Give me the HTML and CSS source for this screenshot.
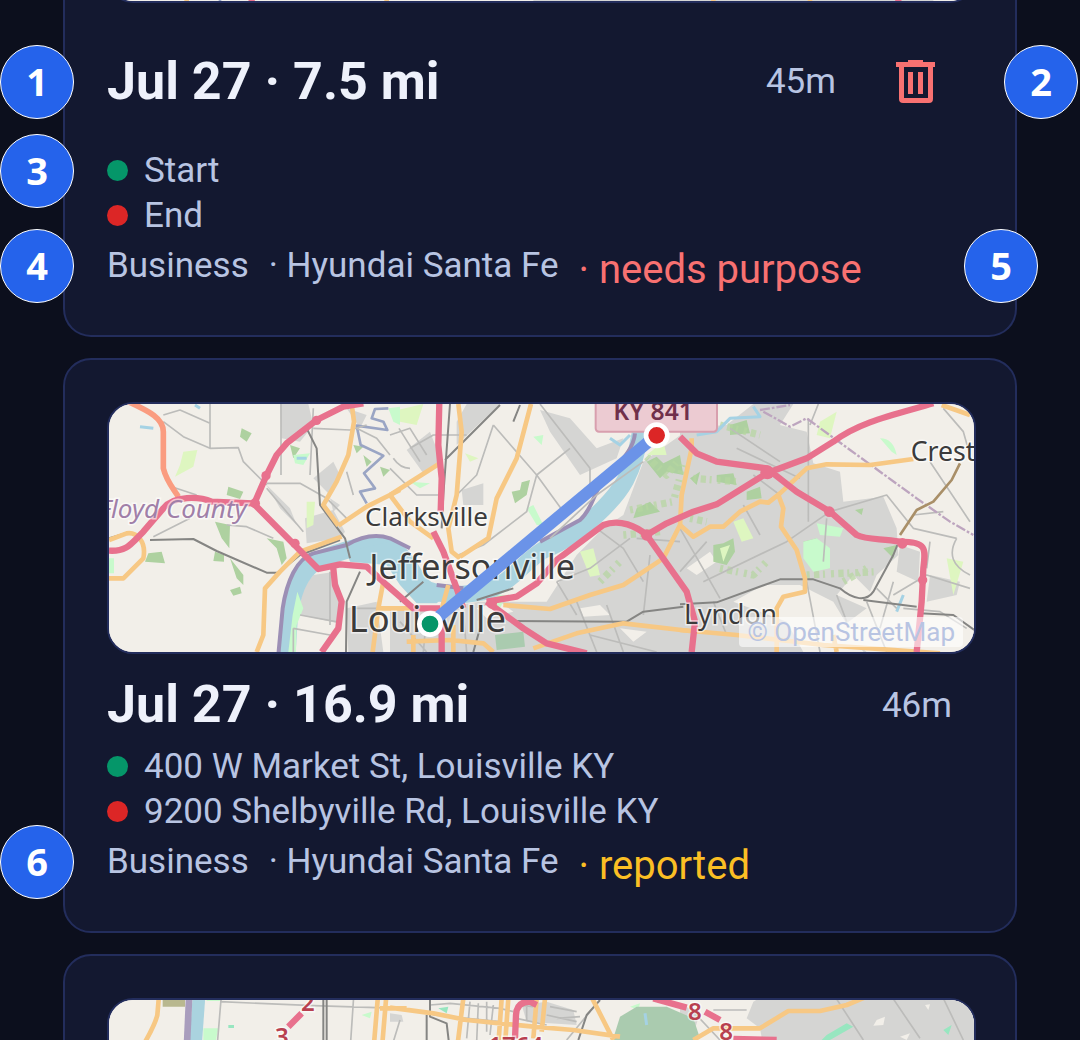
FILE: index.html
```html
<!DOCTYPE html>
<html lang="en">
  <head>
    <meta charset="utf-8">
    <meta name="viewport" content="width=device-width, initial-scale=1">
    <title>Trips</title>
    <link rel="stylesheet" href="styles.css">
  </head>
  <body>
    <main class="trips">
      <article class="card card-continued">
        <div class="map-peek">
          <div class="map">
            <svg viewBox="27 27 2595 744" aria-hidden="true">
              <rect class="base" x="0" y="0" width="2640" height="780"/>
              <path class="urban" d="M1300 27H2500V771H1300Z"/>
              <path class="secondary" d="M260 600V771M860 600V771M1840 600V771M2130 600V771"/>
              <path class="creek" d="M360 600V771"/>
              <path class="major" d="M455 600V771M2395 600V771"/>
            </svg>
          </div>
        </div>
        <header class="head head-tall">
          <span class="badge badge-left">1</span>
          <h2 class="title">Jul 27 · 7.5 mi</h2>
          <span class="duration">45m</span>
          <button class="delete" type="button" aria-label="Delete trip">
            <svg class="trash" viewBox="0 0 40 44" aria-hidden="true">
              <path d="M12 0H27V2H39V7H37V39Q37 43 33 43H7Q3 43 3 39V7H0V2H12ZM8 7V38H32V7Z" fill-rule="evenodd"/>
              <path d="M12 12H17V34H12ZM22 12H27V34H22Z"/>
            </svg>
          </button>
          <span class="badge badge-right">2</span>
        </header>
        <ul class="stops">
          <li class="stop"><span class="badge badge-left">3</span><span class="dot start"></span>Start</li>
          <li class="stop"><span class="dot end"></span>End</li>
        </ul>
        <div class="meta">
          <span class="badge badge-left">4</span>
          <span>Business</span>
          <span>· Hyundai Santa Fe</span>
          <span class="status missing">· needs purpose</span>
          <span class="badge badge-inside">5</span>
        </div>
      </article>

      <article class="card">
        <div class="map">
          <svg viewBox="27 27 2595 744" role="img" aria-label="Route from Louisville to KY 841">
            <rect class="base" x="0" y="0" width="2640" height="780"/>

            <!-- built up areas -->
            <g class="urban">
              <path d="M540 27H625L640 90L600 140L545 130ZM615 370L700 345L735 410L720 430L620 445ZM600 590L640 540L705 530L725 600L715 685L600 660ZM500 270L570 340L590 390L540 340ZM690 310L720 330L700 350Z"/>
              <path d="M640 250L700 200L720 240L690 300ZM740 40L800 60L780 100ZM740 640L830 620L850 771H745Z"/>
              <g transform="translate(870 0)">
                <path d="M450 45L540 70L620 160L700 130L680 190L570 240L480 110ZM50 165L120 110L155 200L100 235ZM215 285L280 265L280 330L220 330ZM230 27H330L200 150V80Z"/>
                <path d="M470 620L560 480L640 400L700 360L760 200L900 100V771H0V650L130 640L270 620Z"/>
              </g>
              <g transform="translate(1740 0)">
                <path d="M0 100L140 90L220 27H340L300 90L380 110L400 205L480 230L490 320L610 305L650 400L655 480L590 540L570 590L520 540L470 600L560 640L480 700L560 771H0Z"/>
                <path d="M660 450L720 470L715 560L650 530ZM750 540L840 560L830 600L740 620Z"/>
              </g>
            </g>
            <g class="clearing">
              <path d="M1900 620L1990 570L2100 570L2200 620L2290 771H2110L2060 680Z"/>
              <path d="M1130 640L1200 620L1240 650L1160 670ZM1760 520L1830 470L1850 500L1790 540Z"/>
              <path d="M1440 640L1500 630L1530 660L1450 665ZM1560 700L1640 710L1600 740Z"/>
            </g>

            <!-- parks and woods -->
            <g class="wood">
              <path d="M425 100L455 115L440 140L420 125ZM385 275L430 290L420 312L380 300ZM345 380L390 390L388 460L365 430ZM345 470L372 480V500L340 498ZM390 490L430 540V570L410 550ZM390 585L420 575L425 595L400 602ZM145 475L185 470L195 505L135 500ZM500 430L550 440L560 490L545 510L530 460ZM570 150L600 160L580 190ZM760 150L790 155L770 175ZM790 180L815 200L800 215ZM840 215L870 225L850 245Z"/>
              <path d="M1235 290L1260 285L1265 262L1290 255L1280 300L1245 325ZM1640 200L1670 185L1690 205L1740 180L1750 240L1700 230L1680 250ZM1610 340L1650 320L1680 350L1600 370Z"/>
              <path d="M1840 450L1870 445L1900 430L1905 470L1880 510L1840 500ZM1770 250L1800 230L1790 270ZM1850 240L1900 235L1910 270L1850 260ZM1940 290L1980 275L1985 310L1940 315ZM1890 90L1940 75L1950 115L1890 120ZM2350 460L2390 450L2380 490ZM2265 345L2290 340L2285 360ZM2110 440L2150 430L2130 460Z"/>
            </g>
            <g class="speckle">
              <path d="M1590 345L1720 320L1750 210M1640 185L1700 240L1740 190M1570 420L1680 410M1500 560L1560 500"/>
              <path d="M1780 250L1910 260M1860 90L1980 120M1860 520L1960 540L2000 500M2120 540L2330 530M1770 370L1820 380M2230 560L2300 520"/>
            </g>
            <g class="grass">
              <path d="M250 170L292 165L280 215L225 245L240 210ZM620 320L645 320L640 390L620 400ZM870 50L970 27L950 90L900 80ZM600 530L640 500L620 560L600 590ZM1095 175L1135 190L1110 200ZM1440 470L1480 460L1500 540L1470 545ZM1900 380L1930 370L1960 430L1925 440ZM1860 460L1890 450L1870 500ZM2160 80L2210 50L2190 130L2150 120ZM2540 490L2590 500L2560 600ZM1640 180L1690 140L1700 180Z"/>
            </g>
            <g class="mint">
              <path d="M580 180L630 175L610 210L585 205ZM27 490L42 490V535H27ZM865 40L900 35V90L880 80ZM1280 340L1300 330L1330 390L1310 390ZM1300 125L1330 120L1325 150ZM2110 440L2150 430L2190 460L2190 520L2140 530L2110 490ZM2150 385L2230 400L2220 425L2160 420ZM2340 130Q2380 130 2390 180L2375 170ZM930 260L990 265L960 280ZM1150 600L1220 600L1200 640Z"/>
            </g>
            <path class="green-park" d="M1185 720L1270 710L1275 755L1190 765Z"/>

            <!-- Ohio river and creeks -->
            <path class="river" d="M560 790L568 660C580 570 610 510 680 485C750 460 810 440 870 460C940 490 940 580 1000 590C1060 605 1090 600 1150 590C1230 570 1270 500 1330 465C1400 440 1470 380 1510 340C1560 290 1600 240 1622 110"/>
            <path class="water" d="M740 470L870 440L930 480L970 560L1050 590L1010 625L950 625L900 570L860 510L750 500Z"/>
            <path class="mint" d="M565 771L578 660L592 590L610 640L590 690L588 771Z"/>
            <path class="boundary" d="M535 780L548 640C560 560 590 490 640 475L740 450C800 415 840 420 870 430L930 460M1010 570L1090 580M1320 440L1440 375C1480 340 1480 290 1510 260C1550 210 1600 170 1605 115"/>
            <path class="creek" d="M865 40L825 42L815 70L850 80L862 105L770 92L782 150L850 182L792 235L825 280L780 290L800 325"/>
            <path class="creek-blue" d="M1790 120L1850 110L1890 70L1980 65L1960 35M2410 600L2390 650M120 95L160 100M285 30L300 40M1530 130L1560 150L1590 120M590 190H620"/>

            <!-- local roads -->
            <g class="minor">
              <path d="M190 80L250 125L330 160L415 158L430 200L500 270M330 27V160M190 60L240 45L330 85M543 27V240M500 265H600L680 310L740 370M500 280L610 410M380 390L440 395L520 430M160 425L270 370M640 100L750 105L800 90M215 275L290 300M600 660L720 682M580 700V771M580 700L690 720M690 530V690M760 300L740 230M640 40L630 240M870 180L830 130L770 100M880 190Q900 220 930 220M760 640H850"/>
              <g transform="translate(870 0)">
                <path d="M27 100L90 200M60 160L130 120H230M310 90L440 240L520 350M540 160L440 240L410 350L280 450L205 480M450 27L600 220M600 220V270M760 200L620 300L480 430M0 120L60 100L110 180M310 90L260 240L200 300M0 220L80 300L150 300M500 560L560 660M500 560L600 520L720 430M650 630L700 771M620 400L700 460L760 560M560 620L620 771M740 430L870 440M780 480L760 660M600 720L800 771"/>
                <path d="M30 680L110 771M110 660L100 771M220 650L230 771"/>
              </g>
              <g transform="translate(1740 0)">
                <path d="M0 400L120 610M70 560L320 440L450 350L620 300L700 400L830 430M150 100L300 200M385 70V380M415 27L390 90M190 330L240 420M440 370L430 500M790 40L850 110L870 180M750 200L870 380M700 360L790 350M830 430Q790 500 870 540M750 440L740 520M640 600L740 540L870 580M590 580L650 640M670 640L780 650L860 700M560 620L620 771M470 600L500 680M100 620L140 720M380 560L420 771M640 560L600 700"/>
                <path d="M220 240L300 300M170 160L360 250M0 530L80 440"/>
              </g>
            </g>
            <g class="rail">
              <path d="M27 430L75 415M150 435L280 432L350 468L500 533H535L600 480L720 435M620 100L650 160L660 330L735 430L750 490M780 530L740 620L738 771"/>
              <path d="M1050 27L1030 300L1025 400M1200 30L1035 195M1260 30L1240 80M1230 678L1580 680L1630 650L1750 635M1130 615L1240 580M900 620L970 560M1140 700L1120 771"/>
              <path d="M1740 628L1850 622L2040 553L2140 553L2220 580C2260 615 2300 620 2320 590L2380 480L2392 450M2290 615L2450 635M2460 655L2560 660L2630 710"/>
            </g>
            <path class="county" d="M1980 45L2070 30M1990 50L2070 95L2120 70L2230 150L2450 310L2550 380L2620 420"/>

            <!-- secondary roads -->
            <g class="secondary">
              <path d="M27 550H70L130 490C140 440 110 410 80 415L27 435M470 771L490 720L495 580L540 530L600 470L725 425M715 392L800 335L900 285M715 392L670 330L710 260L745 180L762 80L755 27M850 560L835 640L818 771M835 640H940"/>
              <g transform="translate(870 0)">
                <path d="M0 300L150 205M0 300L60 380L130 430M205 27L215 110L200 300L175 400L185 470L210 490M210 485L295 430L320 310L380 190L423 27M340 630L480 642L600 600L700 570L820 490L870 390L875 300L905 160V130M430 760L560 715L700 685L900 708M175 570L150 660M70 720V771M190 690V771M50 740L180 735L280 745L310 771M0 640H70"/>
              </g>
              <g transform="translate(1740 0)">
                <path d="M0 390L40 425L90 395L130 395L180 350L240 320L265 323L300 295L380 220L440 208L570 210L700 192M295 300L310 340L303 395L350 465L375 550V590L310 605L290 640V771M0 705L170 720L430 750L780 775M785 30L870 60M470 771L460 720"/>
              </g>
            </g>
            <path class="brown" d="M2580 205L2555 255L2500 320L2450 345L2400 420"/>

            <!-- highways -->
            <path class="trunk" d="M85 20C150 50 190 70 190 110V220C200 260 220 280 235 305"/>
            <g class="major">
              <path d="M27 467C80 470 90 450 130 410L190 340C220 300 300 305 335 320L460 325L655 522L720 508L800 515L860 570L940 640L1020 640M465 320L500 240L530 180L560 145L650 75L730 35L790 25M700 520L705 570L725 620L715 700L665 771"/>
              <path d="M1018 20L1015 150L1025 250L1022 350M1000 410L1030 470L1070 580L1090 640M1025 660V771M1160 620L1250 605L1310 565L1370 495L1510 390C1560 370 1610 395 1640 420L1700 385L1780 350L1850 328L2000 235L2120 190L2200 140C2280 80 2380 60 2500 25M1640 420L1760 590L1785 680L1775 771M1160 620L1270 700L1340 745L1460 775M1740 125L1790 175L1850 200L2000 220L2090 290L2190 350L2270 420C2300 435 2340 430 2400 440C2480 440 2478 460 2470 520L2465 620L2450 771"/>
            </g>
            <g class="junction">
              <circle cx="2002" cy="232" r="21"/><circle cx="2188" cy="350" r="16"/><circle cx="2407" cy="445" r="16"/><circle cx="1640" cy="420" r="17"/><circle cx="465" cy="325" r="15"/><circle cx="585" cy="445" r="14"/><circle cx="498" cy="242" r="14"/><circle cx="650" cy="76" r="14"/><circle cx="1175" cy="625" r="16"/><circle cx="2468" cy="555" r="14"/>
            </g>

            <rect class="shield" x="1487" y="-20" width="364" height="130" rx="10"/>
            <text class="shield-text" x="1540" y="75">KY 841</text>
            <text class="county-name" x="440" y="370" text-anchor="end">Floyd County</text>
            <text class="town" x="795" y="393">Clarksville</text>
            <text class="city" x="808" y="553">Jeffersonville</text>
            <text class="city capital" x="746" y="712">Louisville</text>
            <text class="suburb" x="1752" y="686">Lyndon</text>
            <text class="suburb" x="2432" y="198">Crest</text>

            <path class="route" d="M990 687L1670 120"/>
            <circle class="pin pin-start" cx="990" cy="687" r="32"/>
            <circle class="pin pin-end" cx="1670" cy="121" r="32"/>
          </svg>
          <a class="attribution" href="#">© OpenStreetMap</a>
        </div>
        <header class="head">
          <h2 class="title">Jul 27 · 16.9 mi</h2>
          <span class="duration">46m</span>
        </header>
        <ul class="stops">
          <li class="stop"><span class="dot start"></span>400 W Market St, Louisville KY</li>
          <li class="stop"><span class="dot end"></span>9200 Shelbyville Rd, Louisville KY</li>
        </ul>
        <div class="meta">
          <span class="badge badge-left">6</span>
          <span>Business</span>
          <span>· Hyundai Santa Fe</span>
          <span class="status reported">· reported</span>
        </div>
      </article>

      <article class="card">
        <div class="map">
          <svg viewBox="27 45 2595 744" role="img" aria-label="Trip map">
            <rect class="base" x="0" y="0" width="2640" height="800"/>
            <path class="urban" d="M1960 50L2000 27H2640V800H2100L1980 130L1940 100ZM870 85L905 90L910 110H870ZM1265 60L1340 50L1420 75L1430 120L1280 110ZM1740 60L1800 80L1780 150L1740 140Z"/>
            <path class="clearing" d="M2330 105L2355 95L2350 120L2320 122ZM2400 155L2430 145L2420 165ZM2475 60L2490 58L2485 75Z"/>
            <path class="farm" d="M188 40H255V65H188Z"/>
            <path class="mint" d="M310 130H355L345 180H310ZM320 40H365V48H320ZM1590 65L1620 55L1615 75ZM785 90L815 80L810 100Z"/>
            <path class="green" d="M2165 165L2180 150L2240 115L2260 125L2190 165ZM1015 70L1045 65L1040 85ZM385 120H402V129H385ZM2530 135L2555 120L2545 150Z"/>
            <path class="green-park" d="M1540 160L1560 95L1610 65L1700 65L1780 100L1800 160L1700 200H1560Z"/>
            <path class="river narrow" d="M298 20L285 200"/>
            <path class="creek wide" d="M268 20L260 200"/>
            <path class="creek-blue" d="M1635 85L1640 120"/>
            <path class="minor" d="M365 20L350 200M360 50L640 62L900 70M762 20L750 200M990 60L1050 55L1200 70L1240 80M1110 50L1100 160M1135 55L1130 170M1160 50V140M1180 60L1170 150M1000 90L1200 110M1250 100L1340 120M1350 65L1430 80M1370 100L1440 95M1340 90L1430 110M1470 80L1400 165M900 105L880 170M1280 60V110M1250 60L1300 65M1840 75H1940M2200 27L2290 165M2370 27L2460 160M2530 40L2590 165M1780 80L1860 165"/>
            <path class="rail" d="M670 20V200M680 20V200M990 20V95L1040 115L1050 200M980 90V200M1500 45L1460 90L1435 165"/>
            <path class="secondary" d="M178 20L172 90C165 120 150 145 130 180M835 20L820 200M860 20L845 200M840 70H920M870 68L1000 85L1100 105L1300 125L1420 135L1560 155M1090 40L1070 200M1205 40L1195 180M1225 40L1215 180M1310 40L1300 160M1335 40L1325 140M1470 27L1540 165M1780 165L1840 130H1980L2065 78L2160 78L2240 60L2300 35"/>
            <path class="major" d="M605 85L565 125M1245 160L1248 90Q1250 50 1290 50L1310 60M1660 40L1760 68M1815 80L1860 105M1900 162L2030 165"/>
            <text class="exit" x="603" y="78">2</text>
            <text class="exit" x="525" y="180">3</text>
            <text class="exit" x="1165" y="207">1764</text>
            <text class="exit" x="1764" y="104">8</text>
            <text class="exit" x="1858" y="164">8</text>
          </svg>
        </div>
      </article>
    </main>
  </body>
</html>
```
FILE: styles.css
```css
* {
    box-sizing: border-box;
}
body {
    margin: 0;
    height: 100vh;
    overflow: hidden;
    background: #0c0f1d;
    color: #b8c4e2;
    font-family: Roboto, "Liberation Sans", sans-serif;
    font-size: 35px;
}
.trips {
    display: flex;
    flex-direction: column;
    gap: 21px;
    padding: 0 63px;
}
.card {
    padding: 42px 39px 42px 42px;
    border: 2px solid #232d5c;
    border-radius: 28px;
    background: #131830;
}
.card-continued {
    padding-top: 0;
    border-top: 0;
    border-top-left-radius: 0;
    border-top-right-radius: 0;
}
/* only the last pixels of this map are scrolled into view */
.map-peek {
    display: flex;
    align-items: flex-end;
    height: 3px;
    overflow: hidden;
}
.map {
    position: relative;
    width: 100%;
    overflow: hidden;
    border: 2px solid #232d5c;
    border-radius: 26px;
    background: #f2efe9;
}
.map svg {
    display: block;
    width: 100%;
    height: auto;
}
.attribution {
    position: absolute;
    right: 11px;
    bottom: 5px;
    padding: 0 8px;
    border-radius: 4px;
    background: rgba(255, 255, 255, 0.6);
    color: #b8c4e2;
    font-size: 26px;
    line-height: 30px;
    text-decoration: none;
}

/* card text */
.head {
    position: relative;
    display: flex;
    align-items: center;
    margin: 21px 0 9px;
    padding-right: 24px;
}
.head-tall {
    min-height: 115px;
    padding-right: 0;
}
.title {
    flex: 1;
    margin: 0;
    color: #eef1fb;
    font-size: 52px;
    font-weight: 700;
    line-height: 60px;
}
.delete {
    display: flex;
    align-items: center;
    justify-content: center;
    width: 120px;
    height: 115px;
    margin-left: 20px;
    padding: 0;
    border: 0;
    background: none;
    color: #f87171;
    cursor: pointer;
}
.trash {
    width: 40px;
    height: 44px;
    fill: currentColor;
}
.stops {
    margin: 0;
    padding: 0;
    list-style: none;
}
.stop {
    position: relative;
    display: flex;
    align-items: center;
    gap: 16px;
    line-height: 45px;
}
.dot {
    width: 21px;
    height: 21px;
    border-radius: 50%;
}
.start {
    background: #059669;
}
.end {
    background: #dc2626;
}
.meta {
    position: relative;
    display: flex;
    align-items: center;
    gap: 20px;
    height: 55px;
}
.status {
    padding-top: 8px;
    font-size: 40px;
}
.missing {
    color: #f87171;
}
.reported {
    color: #fbbf24;
}

/* numbered callouts */
.badge {
    position: absolute;
    top: 50%;
    width: 74px;
    height: 74px;
    border: 1px solid #fff;
    border-radius: 50%;
    transform: translateY(-50%);
    background: #2563eb;
    color: #fff;
    font-family: "Open Sans", "Noto Sans", sans-serif;
    font-size: 38px;
    font-weight: 700;
    line-height: 70px;
    text-align: center;
}
.badge-left {
    left: -107px;
}
.badge-right {
    right: -102px;
}
.badge-inside {
    right: -62px;
}

/* map drawing */
.map path {
    stroke-linejoin: round;
}
.base, .clearing {
    fill: #f2efe9;
}
.urban {
    fill: #d5d5d3;
}
.farm {
    fill: #b9b88f;
}
.wood {
    fill: #aed1a0;
}
.grass {
    fill: #def6c0;
}
.mint {
    fill: #c8facc;
}
.green {
    fill: #98e6c0;
}
.green-park {
    fill: #aacbaf;
}
.speckle {
    fill: none;
    stroke: #b5d6a0;
    stroke-width: 22;
    stroke-dasharray: 9 13 16 11 6 18;
    opacity: 0.7;
}
.river, .boundary, .creek, .creek-blue, .minor, .rail, .county, .secondary, .brown, .trunk, .major, .route {
    fill: none;
}
.river {
    stroke: #aad3df;
    stroke-width: 52;
}
.water {
    fill: #aad3df;
}
.narrow {
    stroke-width: 38;
}
.boundary {
    stroke: #9c8fb5;
    stroke-width: 12;
}
.creek {
    stroke: #9aa5c4;
    stroke-width: 8;
}
.wide {
    stroke: #a99dbd;
    stroke-width: 20;
}
.creek-blue {
    stroke: #a5d2e4;
    stroke-width: 9;
}
.minor {
    stroke: #bcbcba;
    stroke-width: 5;
}
.rail {
    stroke: #858583;
    stroke-width: 6;
}
.county {
    stroke: #bda5bf;
    stroke-width: 7;
    stroke-dasharray: 30 6 8 6;
}
.secondary {
    stroke: #f7c884;
    stroke-width: 14;
}
.brown {
    stroke: #a98f68;
    stroke-width: 8;
}
.trunk {
    stroke: #fa9c80;
    stroke-width: 17;
}
.major {
    stroke: #e8718d;
    stroke-width: 19;
}
.junction {
    fill: #e8718d;
}
.map text {
    font-family: "Noto Sans", "Open Sans", sans-serif;
    fill: #3b3b3b;
    stroke: #fff;
    stroke-opacity: 0.6;
    stroke-width: 9;
    paint-order: stroke;
}
.map .town {
    font-size: 78px;
}
.map .city {
    font-size: 102px;
}
.map .capital {
    font-size: 109px;
}
.map .suburb {
    font-size: 80px;
}
.map .county-name {
    fill: #a07fa8;
    font-size: 78px;
    font-style: italic;
}
.map .exit {
    fill: #b8404f;
    font-size: 72px;
    font-weight: 600;
}
.shield {
    fill: #eccbd2;
    stroke: #d89fae;
    stroke-width: 6;
}
.map .shield-text {
    fill: #70304b;
    stroke: none;
    font-size: 74px;
    font-weight: 600;
}
.route {
    stroke: #6b93e8;
    stroke-width: 36;
}
.pin {
    stroke: #fff;
    stroke-width: 14;
}
.pin-start {
    fill: #059669;
}
.pin-end {
    fill: #dc2626;
}
```
